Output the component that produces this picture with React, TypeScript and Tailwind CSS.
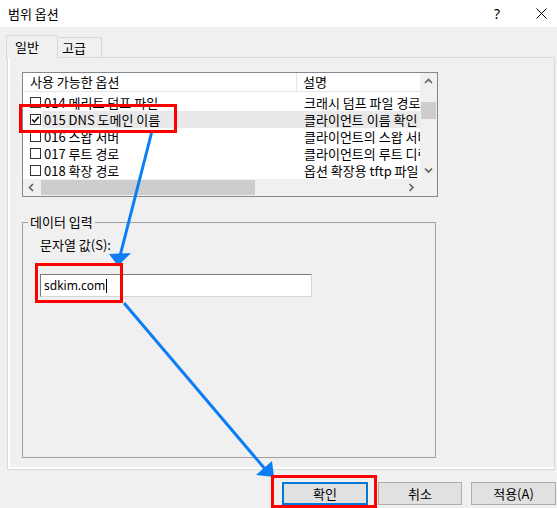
import React from 'react'

type Row = { code: string; desc: string; checked?: boolean; selected?: boolean }

const rows: Row[] = [
  { code: '014 메리트 덤프 파일', desc: '크래시 덤프 파일 경로' },
  { code: '015 DNS 도메인 이름', desc: '클라이언트 이름 확인', checked: true, selected: true },
  { code: '016 스왑 서버', desc: '클라이언트의 스왑 서버' },
  { code: '017 루트 경로', desc: '클라이언트의 루트 디렉터리' },
  { code: '018 확장 경로', desc: '옵션 확장용 tftp 파일' },
]

function Chevron({ dir }: { dir: 'up' | 'down' | 'left' | 'right' }) {
  const d = {
    up: 'M1 5 L4.5 1.5 L8 5',
    down: 'M1 1.5 L4.5 5 L8 1.5',
    left: 'M5 1 L1.5 4.5 L5 8',
    right: 'M1.5 1 L5 4.5 L1.5 8',
  }[dir]
  const horiz = dir === 'up' || dir === 'down'
  return (
    <svg width={horiz ? 9 : 7} height={horiz ? 7 : 9} viewBox={horiz ? '0 0 9 7' : '0 0 7 9'}>
      <path d={d} fill="none" stroke="#606060" strokeWidth="1.6" />
    </svg>
  )
}

function CheckBox({ checked }: { checked?: boolean }) {
  return (
    <div className="w-[11px] h-[11px] border border-[#333] bg-white flex items-center justify-center">
      {checked && (
        <svg width="9" height="9" viewBox="0 0 9 9">
          <path d="M1.2 4.6 L3.4 6.9 L7.8 1.8" fill="none" stroke="#000" strokeWidth="1.4" />
        </svg>
      )}
    </div>
  )
}

function OptionList() {
  return (
    <div className="w-[416px] h-[125px] border border-[#828790] bg-white flex flex-col">
      <div className="flex h-[106px]">
        <div className="w-[397px] flex flex-col">
          {/* column header */}
          <div className="flex h-[19px] border-b border-[#e5e5e5]">
            <div className="w-[274px] border-r border-[#e5e5e5] pl-[7px] flex items-center">사용 가능한 옵션</div>
            <div className="flex-1 pl-[6px] flex items-center">설명</div>
          </div>
          <div className="pt-[2px]">
            {rows.map((r) => (
              <div key={r.code} className="flex h-[17px]">
                <div className="w-[19px] pl-[7px] flex items-center">
                  <CheckBox checked={r.checked} />
                </div>
                <div className={`flex flex-1 items-center leading-[15px] ${r.selected ? 'bg-[#e9e9e9]' : ''}`}>
                  <div className="w-[255px] pl-[2px] whitespace-nowrap">{r.code}</div>
                  <div className="w-[123px] pl-[7px] whitespace-nowrap overflow-x-clip">{r.desc}</div>
                </div>
              </div>
            ))}
          </div>
        </div>
        {/* vertical scrollbar */}
        <div className="w-[17px] bg-[#f0f0f0] flex flex-col">
          <div className="h-[17px] flex items-center justify-center">
            <Chevron dir="up" />
          </div>
          <div className="mt-[12px] mx-[1px] h-[17px] bg-[#cdcdcd]" />
          <div className="flex-1" />
          <div className="h-[17px] flex items-center justify-center">
            <Chevron dir="down" />
          </div>
        </div>
      </div>
      {/* horizontal scrollbar */}
      <div className="flex h-[17px] bg-[#f0f0f0]">
        <div className="w-[397px] flex items-center">
          <div className="w-[17px] h-[17px] flex items-center justify-center">
            <Chevron dir="left" />
          </div>
          <div className="ml-[1px] w-[214px] h-[15px] bg-[#cdcdcd]" />
          <div className="flex-1" />
          <div className="w-[17px] h-[17px] flex items-center justify-center">
            <Chevron dir="right" />
          </div>
        </div>
        <div className="w-[17px]" />
      </div>
    </div>
  )
}

function Annotations() {
  const blue = '#0c7ef5'
  return (
    <svg className="absolute inset-0 pointer-events-none" width="557" height="508" viewBox="0 0 557 508">
      <line x1="152" y1="131" x2="120" y2="256" stroke={blue} strokeWidth="3" />
      <polygon points="109,254 131,253 118,266" fill={blue} />
      <line x1="124" y1="303" x2="265" y2="469" stroke={blue} strokeWidth="3" />
      <polygon points="256,475 272,461 274,477" fill={blue} />
      <rect x="20.5" y="105.5" width="155" height="26" fill="none" stroke="#ff0000" strokeWidth="3" />
      <rect x="36.5" y="264.5" width="85" height="37" fill="none" stroke="#ff0000" strokeWidth="3" />
      <rect x="272.5" y="476.5" width="103" height="30" fill="none" stroke="#ff0000" strokeWidth="3" />
    </svg>
  )
}

export default function App() {
  return (
    <div className="relative w-[557px] h-[508px] overflow-hidden bg-[#f0f0f0] text-[13px] leading-4 text-black font-['Noto_Sans_CJK_KR',sans-serif]">
      {/* Title bar */}
      <div className="h-[27px] bg-white flex items-center pl-[8px]">
        <span>범위 옵션</span>
        <span className="ml-auto text-[14px] leading-none font-['Noto_Sans',sans-serif]">?</span>
        <svg className="ml-[36px] mr-[10px]" width="11" height="11" viewBox="0 0 11 11">
          <path d="M0.5 0.5 L10.5 10.5 M10.5 0.5 L0.5 10.5" stroke="#000" strokeWidth="1" />
        </svg>
      </div>

      {/* Tabs */}
      <div className="flex items-end pl-[6px] pt-[8px]">
        <div className="relative z-10 -mb-px w-[52px] h-[23px] bg-[#f0f0f0] border-t border-l border-r border-[#d9d9d9] pl-[8px] flex items-center">
          일반
        </div>
        <div className="w-[44px] h-[20px] border-t border-r border-[#d9d9d9] pl-[4px] flex items-center">
          고급
        </div>
      </div>

      {/* Tab page */}
      <div className="ml-[7px] mr-[2px] h-[413px] border border-[#d9d9d9] shadow-[inset_2px_-2px_0_#ffffff] pl-[14px] pt-[14px]">
        <OptionList />

        <fieldset className="mt-[17px] w-[414px] h-[244px] border border-[#a0a0a0]">
          <legend className="ml-[5px] px-[2px] leading-4">데이터 입력</legend>
          <div className="pl-[17px] pt-[7px]">
            <div>문자열 값(S):</div>
            <div className="mt-[21px] w-[272px] h-[23px] bg-white border border-[#7a7a7a] border-r-[#d6d6d6] border-b-[#d6d6d6] pl-[3px] flex items-center text-[12px] font-['Noto_Sans',sans-serif]">
              <span>sdkim.com</span>
              <span className="ml-[1px] w-px h-[14px] bg-black" />
            </div>
          </div>
        </fieldset>
      </div>

      {/* Buttons */}
      <div className="mt-[12px] flex justify-end pr-[1px]">
        <button className="w-[86px] h-[23px] bg-[#e1e1e1] border-2 border-[#0078d7]">확인</button>
        <button className="ml-[10px] w-[84px] h-[23px] bg-[#e1e1e1] border border-[#adadad]">취소</button>
        <button className="ml-[9px] w-[85px] h-[23px] bg-[#e1e1e1] border border-[#adadad]">적용(A)</button>
      </div>

      <Annotations />
    </div>
  )
}
